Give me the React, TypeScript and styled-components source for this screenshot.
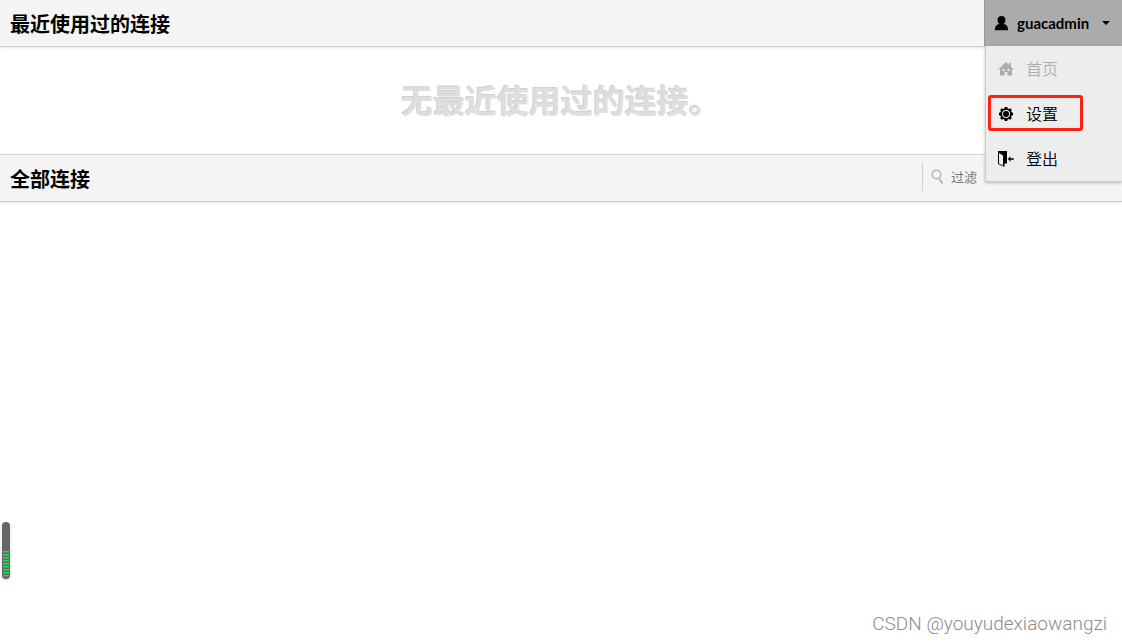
import React from "react";
import styled, { createGlobalStyle } from "styled-components";

const GlobalStyle = createGlobalStyle`
  * { box-sizing: border-box; }
  body {
    margin: 0;
    background: #fff;
    color: #000;
    font-family: Lato, "Noto Sans CJK SC", sans-serif;
    font-size: 16px;
  }
`;

const Page = styled.div`
  position: relative;
  min-height: 100vh;
`;

const HeaderBar = styled.header<{ $ruled?: boolean }>`
  display: flex;
  align-items: stretch;
  height: ${(p) => (p.$ruled ? 48 : 47)}px;
  background: #f4f4f4;
  border-top: ${(p) => (p.$ruled ? "1px solid #d4d4d4" : "0")};
  border-bottom: 1px solid #d0d0d0;
  box-shadow: 0 1px 2px rgba(0, 0, 0, 0.1);
`;

const Title = styled.h2`
  flex: 1;
  margin: 0;
  padding-left: 10px;
  font-size: 20px;
  line-height: 48px;
  font-weight: 700;
`;

const UserMenu = styled.nav`
  position: relative;
  width: 138px;
`;

const UserButton = styled.button`
  display: flex;
  align-items: center;
  width: 100%;
  height: 46px;
  padding: 0 12px 0 9px;
  border: 0;
  border-left: 1px solid #999;
  background: #ababab;
  color: #000;
  font: 700 15px/20px Lato, sans-serif;
  cursor: pointer;
`;

const UserName = styled.span`
  flex: 1;
  padding-left: 8px;
  text-align: left;
`;

const Menu = styled.ul`
  position: absolute;
  z-index: 2;
  top: 46px;
  right: 0;
  width: 137px;
  margin: 0;
  padding: 0;
  list-style: none;
  background: #ededed;
  border-left: 1px solid #ccc;
  border-bottom: 1px solid #ccc;
  box-shadow: 0 1px 3px rgba(0, 0, 0, 0.25);
`;

const MenuItem = styled.li`
  position: relative;
`;

const MenuLink = styled.a<{ $current?: boolean }>`
  display: flex;
  align-items: center;
  gap: 12px;
  height: 45px;
  padding-left: 12px;
  color: #000;
  opacity: ${(p) => (p.$current ? 0.27 : 1)};
  font-weight: 350;
  line-height: 24px;
  text-decoration: none;
`;

const Highlight = styled.span`
  position: absolute;
  top: 4px;
  left: 2px;
  width: 95px;
  height: 36px;
  border: 3px solid #fc2115;
  border-radius: 3px;
  pointer-events: none;
`;

const EmptyMessage = styled.p`
  margin: 0;
  padding: 30px 0 29px;
  text-align: center;
  color: #dedede;
  font-size: 32px;
  line-height: 48px;
  font-weight: 700;
  text-shadow: -1px -1px 0 #d0d0d0;
`;

const Filter = styled.label`
  display: flex;
  align-items: center;
  gap: 6px;
  width: 200px;
  height: 28px;
  margin-top: 8px;
  padding-left: 8px;
  border-left: 1px solid #d0d0d0;
`;

const FilterInput = styled.input`
  flex: 1;
  min-width: 0;
  padding: 0;
  border: 0;
  outline: 0;
  background: transparent;
  font: 400 13px/20px Lato, "Noto Sans CJK SC", sans-serif;
  &::placeholder { color: #777; }
`;

const Meter = styled.div`
  position: absolute;
  left: 2px;
  bottom: 65px;
  display: flex;
  align-items: flex-end;
  width: 8px;
  height: 57px;
  padding: 0 1px 2px;
  border-radius: 4px;
  background: #666;
  box-shadow: 0 1px 3px rgba(0, 0, 0, 0.2);
`;

const MeterLevel = styled.div`
  width: 100%;
  height: 26px;
  border-radius: 0 0 3px 3px;
  background: repeating-linear-gradient(#20e05b 0 1px, #3fa35d 1px 2px, #5f6b62 2px 3px);
`;

const Watermark = styled.footer`
  position: absolute;
  right: 15px;
  bottom: 8px;
  color: #8c8c8c;
  font: 300 19px/24px Roboto, sans-serif;
`;

const UserIcon = () => (
  <svg width="15" height="16" viewBox="0 0 15 16" aria-hidden="true">
    <path d="M7.500 1C5 1 3.500 2.600 3.500 4.900c0 1.800.8 3.200 1.900 4C3 9.300 1 10.600 .8 15.300h13.400c-.2-4.700-2.200-6-4.600-6.400 1.100-.8 1.900-2.200 1.900-4C11.500 2.600 10 1 7.500 1z" />
  </svg>
);

const CaretIcon = () => (
  <svg width="8" height="4" viewBox="0 0 8 4" aria-hidden="true">
    <path d="M0 0h8L4 4z" />
  </svg>
);

const HomeIcon = () => (
  <svg width="16" height="16" viewBox="0 0 16 16" aria-hidden="true">
    <path
      fillRule="evenodd"
      d="M8 1 11 3.900V2H13v3.800L15.800 8.500H14V14.500H9.500V11h-3v3.500H2v-6H.2zM4.500 8v2h2V8zm5 0v2h2V8z"
    />
  </svg>
);

const GearIcon = () => (
  <svg width="16" height="16" viewBox="0 0 16 16" aria-hidden="true">
    <path
      fillRule="evenodd"
      d="M6.800 1h2.400l.5 1.500 1.100.4 1.400-.7 1.600 1.600-.7 1.400.4 1.100 1.500.5v2.400l-1.500.5-.4 1.100.7 1.400-1.600 1.600-1.400-.7-1.100.4L9.200 15H6.800l-.5-1.500-1.100-.4-1.400.7-1.600-1.600.7-1.400-.4-1.100L1 9.200V6.800l1.500-.5.4-1.100-.7-1.400 1.600-1.600 1.400.7 1.100-.4zM8 4a4 4 0 1 0 0 8 4 4 0 0 0 0-8z"
    />
    <circle cx="8" cy="8" r="3" />
  </svg>
);

const LogoutIcon = () => (
  <svg width="16" height="16" viewBox="0 0 16 16" aria-hidden="true">
    <path
      fillRule="evenodd"
      d="M0 0h9v12.500H6.500V16L0 13zM1 2v10.500l4 2V4.500z"
    />
    <path d="M9.800 8 12.500 5.200v2H15.800v1.600H12.500v2z" />
  </svg>
);

const SearchIcon = () => (
  <svg width="14" height="16" viewBox="0 0 14 16" fill="none" stroke="#b5b5b5" aria-hidden="true">
    <circle cx="5.500" cy="5.500" r="4.300" strokeWidth="1.500" />
    <path d="M8 9.500 11.500 14.500" strokeWidth="2" />
  </svg>
);

export default function App() {
  return (
    <Page>
      <GlobalStyle />
      <HeaderBar>
        <Title>最近使用过的连接</Title>
        <UserMenu>
          <UserButton type="button" aria-expanded="true">
            <UserIcon />
            <UserName>guacadmin</UserName>
            <CaretIcon />
          </UserButton>
          <Menu>
            <MenuItem>
              <MenuLink href="#home" $current><HomeIcon />首页</MenuLink>
            </MenuItem>
            <MenuItem>
              <MenuLink href="#settings"><GearIcon />设置</MenuLink>
              <Highlight />
            </MenuItem>
            <MenuItem>
              <MenuLink href="#logout"><LogoutIcon />登出</MenuLink>
            </MenuItem>
          </Menu>
        </UserMenu>
      </HeaderBar>
      <EmptyMessage>无最近使用过的连接。</EmptyMessage>
      <HeaderBar $ruled>
        <Title>全部连接</Title>
        <Filter>
          <SearchIcon />
          <FilterInput type="text" placeholder="过滤" aria-label="过滤" />
        </Filter>
      </HeaderBar>
      <Meter>
        <MeterLevel />
      </Meter>
      <Watermark>CSDN @youyudexiaowangzi</Watermark>
    </Page>
  );
}
